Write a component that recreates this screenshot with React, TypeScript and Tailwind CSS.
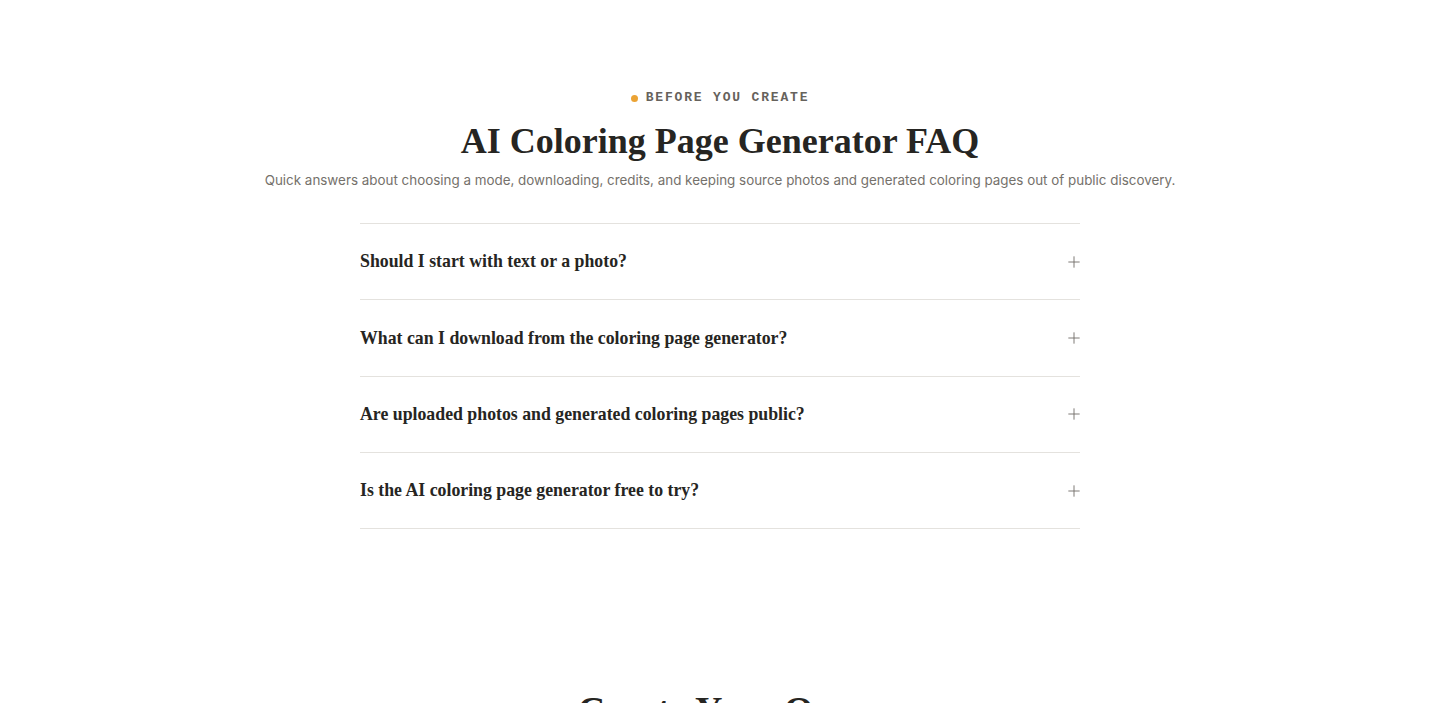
import { Plus } from "lucide-react";

const serif = { fontFamily: '"Liberation Serif", "DejaVu Serif", serif' };

const faqs = [
    "Should I start with text or a photo?",
    "What can I download from the coloring page generator?",
    "Are uploaded photos and generated coloring pages public?",
    "Is the AI coloring page generator free to try?",
];

export default function App() {
    return (
        <div className="min-h-screen bg-white text-[#262522]">
            {/* FAQ */}
            <section className="pt-[89px] pb-[159px] px-6 flex flex-col items-center">
                <div className="flex items-center gap-2 font-['Liberation_Mono',monospace] text-[13px] font-bold tracking-[0.14em] text-[#66625c] leading-[18px]">
                    <span className="w-[7px] h-[7px] rounded-full bg-[#eba334]" />
                    BEFORE YOU CREATE
                </div>
                <h2
                    className="mt-[12px] text-[36px] font-bold leading-[44px] text-[#262522]"
                    style={serif}
                >
                    AI Coloring Page Generator FAQ
                </h2>
                <p className="mt-[7px] font-['Inter',sans-serif] text-[13.4px] leading-[20px] text-[#75716b]">
                    Quick answers about choosing a mode, downloading, credits, and keeping source photos and generated coloring pages out of public discovery.
                </p>

                <div className="mt-[33px] w-[720px] border-t border-[#e4e2de]">
                    {faqs.map((q) => (
                        <button
                            key={q}
                            className="w-full h-[76.3px] flex items-center justify-between border-b border-[#e4e2de] text-left"
                        >
                            <span className="text-[17.8px] font-bold text-[#262522]" style={serif}>
                                {q}
                            </span>
                            <Plus className="w-[18px] h-[18px] text-[#6f6b66] mr-[-3px]" strokeWidth={1.2} />
                        </button>
                    ))}
                </div>
            </section>

            {/* Next section */}
            <section className="flex justify-center">
                <h2 className="text-[38px] font-bold leading-[44px] text-[#262522]" style={serif}>
                    Create Your Own
                </h2>
            </section>
        </div>
    );
}
